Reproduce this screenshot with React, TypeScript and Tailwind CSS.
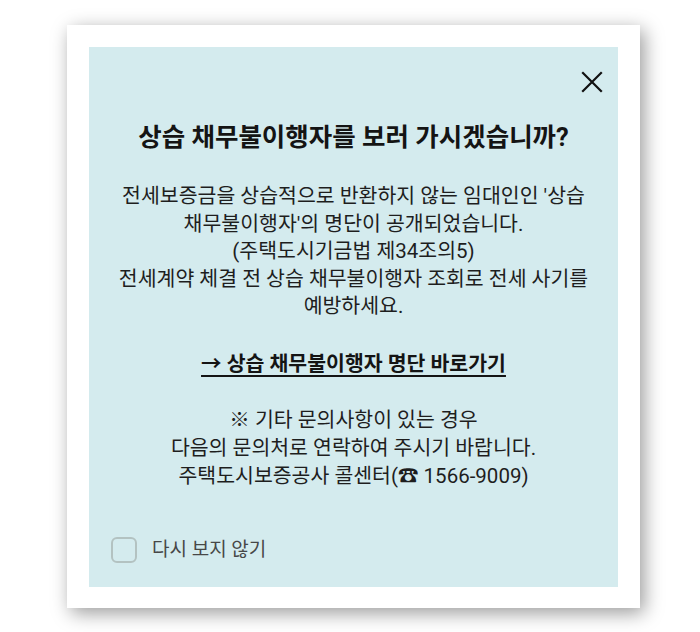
import { useState } from "react";

const FONT = "font-['Roboto','Noto_Sans_CJK_KR',sans-serif]";

function CloseIcon() {
  return (
    <svg width="24" height="24" viewBox="0 0 24 24" fill="none" stroke="#111" strokeWidth="2.2" strokeLinecap="square">
      <path d="M3 3 L21 21 M21 3 L3 21" />
    </svg>
  );
}

export default function App() {
  const [hide, setHide] = useState(false);

  return (
    <div className={`min-h-[632px] w-[700px] bg-white pl-[67px] pt-[25px] ${FONT}`}>
      <div className="w-[573px] bg-white p-[22px] pb-[21px] shadow-[4px_5px_18px_rgba(0,0,0,0.4)]">
        <div className="flex h-[540px] flex-col bg-[#d4ebee]">
          <div className="flex justify-end pr-[14px] pt-[23px]">
            <button className="flex h-[24px] w-[24px] items-center justify-center">
              <CloseIcon />
            </button>
          </div>

          <h2 className="mt-[27px] text-center text-[25.5px] font-bold leading-[32px] text-[#141414]">
            상습 채무불이행자를 보러 가시겠습니까?
          </h2>

          <p className="mt-[30px] text-center text-[20.5px] leading-[27.5px] text-[#1e1e1e]">
            전세보증금을 상습적으로 반환하지 않는 임대인인 '상습
            <br />
            채무불이행자'의 명단이 공개되었습니다.
            <br />
            (주택도시기금법 제34조의5)
            <br />
            전세계약 체결 전 상습 채무불이행자 조회로 전세 사기를
            <br />
            예방하세요.
          </p>

          <a
            href="#"
            className="mt-[30px] self-center text-[20.5px] font-bold leading-[27px] text-[#141414] underline decoration-[1.5px] underline-offset-[4px]"
          >
            → 상습 채무불이행자 명단 바로가기
          </a>

          <p className="mt-[28px] text-center text-[20.5px] leading-[28px] text-[#1e1e1e]">
            ※ 기타 문의사항이 있는 경우
            <br />
            다음의 문의처로 연락하여 주시기 바랍니다.
            <br />
            주택도시보증공사 콜센터(☎ 1566-9009)
          </p>

          <label className="mt-auto mb-[24px] ml-[22px] flex cursor-pointer items-center gap-[15px]">
            <input
              type="checkbox"
              checked={hide}
              onChange={(e) => setHide(e.target.checked)}
              className="peer sr-only"
            />
            <span className="h-[26px] w-[26px] rounded-[6px] border-2 border-[#b3c2c1] bg-[#d4ebee] peer-checked:bg-[#9fb4b3]" />
            <span className="text-[19px] leading-[26px] text-[#474747]">다시 보지 않기</span>
          </label>
        </div>
      </div>
    </div>
  );
}
